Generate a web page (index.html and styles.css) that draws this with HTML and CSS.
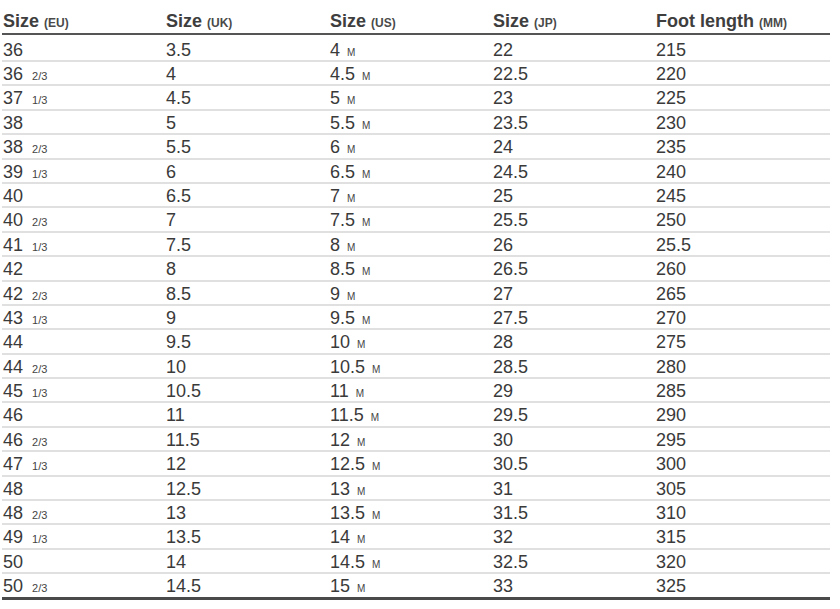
FILE: index.html
```html
<!DOCTYPE html>
<html>
<head>
<meta charset="utf-8">
<link rel="stylesheet" href="styles.css">
</head>
<body>
<div class="chart">
  <div class="row head">
    <div>Size <small>(EU)</small></div>
    <div>Size <small>(UK)</small></div>
    <div>Size <small>(US)</small></div>
    <div>Size <small>(JP)</small></div>
    <div>Foot length <small>(MM)</small></div>
  </div>
  <div class="row first"><div>36</div><div>3.5</div><div>4 <span class="m">M</span></div><div>22</div><div>215</div></div>
  <div class="row"><div>36 <span class="fr">2/3</span></div><div>4</div><div>4.5 <span class="m">M</span></div><div>22.5</div><div>220</div></div>
  <div class="row"><div>37 <span class="fr">1/3</span></div><div>4.5</div><div>5 <span class="m">M</span></div><div>23</div><div>225</div></div>
  <div class="row"><div>38</div><div>5</div><div>5.5 <span class="m">M</span></div><div>23.5</div><div>230</div></div>
  <div class="row"><div>38 <span class="fr">2/3</span></div><div>5.5</div><div>6 <span class="m">M</span></div><div>24</div><div>235</div></div>
  <div class="row"><div>39 <span class="fr">1/3</span></div><div>6</div><div>6.5 <span class="m">M</span></div><div>24.5</div><div>240</div></div>
  <div class="row"><div>40</div><div>6.5</div><div>7 <span class="m">M</span></div><div>25</div><div>245</div></div>
  <div class="row"><div>40 <span class="fr">2/3</span></div><div>7</div><div>7.5 <span class="m">M</span></div><div>25.5</div><div>250</div></div>
  <div class="row"><div>41 <span class="fr">1/3</span></div><div>7.5</div><div>8 <span class="m">M</span></div><div>26</div><div>25.5</div></div>
  <div class="row"><div>42</div><div>8</div><div>8.5 <span class="m">M</span></div><div>26.5</div><div>260</div></div>
  <div class="row"><div>42 <span class="fr">2/3</span></div><div>8.5</div><div>9 <span class="m">M</span></div><div>27</div><div>265</div></div>
  <div class="row"><div>43 <span class="fr">1/3</span></div><div>9</div><div>9.5 <span class="m">M</span></div><div>27.5</div><div>270</div></div>
  <div class="row"><div>44</div><div>9.5</div><div>10 <span class="m">M</span></div><div>28</div><div>275</div></div>
  <div class="row"><div>44 <span class="fr">2/3</span></div><div>10</div><div>10.5 <span class="m">M</span></div><div>28.5</div><div>280</div></div>
  <div class="row"><div>45 <span class="fr">1/3</span></div><div>10.5</div><div>11 <span class="m">M</span></div><div>29</div><div>285</div></div>
  <div class="row"><div>46</div><div>11</div><div>11.5 <span class="m">M</span></div><div>29.5</div><div>290</div></div>
  <div class="row"><div>46 <span class="fr">2/3</span></div><div>11.5</div><div>12 <span class="m">M</span></div><div>30</div><div>295</div></div>
  <div class="row"><div>47 <span class="fr">1/3</span></div><div>12</div><div>12.5 <span class="m">M</span></div><div>30.5</div><div>300</div></div>
  <div class="row"><div>48</div><div>12.5</div><div>13 <span class="m">M</span></div><div>31</div><div>305</div></div>
  <div class="row"><div>48 <span class="fr">2/3</span></div><div>13</div><div>13.5 <span class="m">M</span></div><div>31.5</div><div>310</div></div>
  <div class="row"><div>49 <span class="fr">1/3</span></div><div>13.5</div><div>14 <span class="m">M</span></div><div>32</div><div>315</div></div>
  <div class="row"><div>50</div><div>14</div><div>14.5 <span class="m">M</span></div><div>32.5</div><div>320</div></div>
  <div class="row last"><div>50 <span class="fr">2/3</span></div><div>14.5</div><div>15 <span class="m">M</span></div><div>33</div><div>325</div></div>
</div>
</body>
</html>
```

FILE: styles.css
```css
html, body {
  margin: 0;
  padding: 0;
  background: #fff;
}

.chart {
  margin-left: 2px;
  width: 828px;
  font-family: "Liberation Sans", Arial, sans-serif;
  font-size: 18px;
  color: #3a3a3a;
  border-bottom: 3px solid #4a4a4a;
}

.row {
  display: grid;
  grid-template-columns: 163px 164px 163px 163px 1fr;
  box-sizing: border-box;
  height: 24.4px;
  padding-top: 2px;
  line-height: 20px;
  border-bottom: 2px solid #e0e0e0;
  white-space: nowrap;
}

.row > div {
  padding-left: 1px;
}

.row.head {
  height: 35px;
  padding-top: 11px;
  font-weight: bold;
  color: #3e3e3e;
  border-bottom: 2px solid #555;
}

.row.head small {
  font-size: 12px;
  font-weight: bold;
  color: #4a4a4a;
}

.row.first {
  height: 27px;
  padding-top: 4.6px;
}

.row.last {
  height: 23px;
  border-bottom: none;
}

.fr {
  font-size: 11px;
  margin-left: 4px;
  color: #444;
}

.m {
  font-size: 10px;
  margin-left: 2px;
  color: #444;
}
```
